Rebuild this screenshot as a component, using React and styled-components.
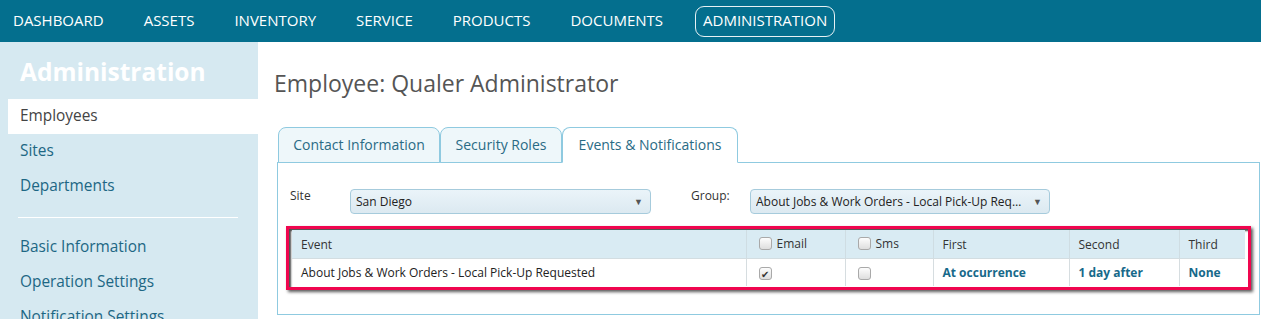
import styled, { createGlobalStyle } from "styled-components";

const GlobalStyle = createGlobalStyle`
  html, body {
    margin: 0;
    padding: 0;
    background: #fff;
    font-family: "Open Sans", "Noto Sans", Arial, sans-serif;
  }
  * {
    box-sizing: border-box;
  }
`;

const Page = styled.div`
  width: 1261px;
  height: 319px;
  overflow: hidden;
`;

const TopNav = styled.nav`
  height: 42px;
  background: #046f8e;
  display: flex;
  align-items: center;
  gap: 24px;
  padding-left: 5px;
`;

const NavItem = styled.a`
  color: #fff;
  font-size: 15px;
  line-height: 19px;
  padding: 4px 7px 6px 7px;
  border: 1px solid ${(p) => (p.$active ? "rgba(255,255,255,0.9)" : "transparent")};
  border-radius: 9px;
  text-decoration: none;
`;

const Body = styled.div`
  display: flex;
  height: 277px;
`;

const Sidebar = styled.aside`
  width: 258px;
  flex: none;
  background: #d6e9f1;
  padding-top: 12px;
`;

const SideTitle = styled.h2`
  margin: 0 0 9px 20px;
  color: #fff;
  font-size: 24.5px;
  line-height: 36px;
  font-weight: 700;
`;

const SideItem = styled.a`
  display: block;
  height: 35px;
  line-height: 33px;
  margin-left: 8px;
  padding-left: 12px;
  font-size: 15.4px;
  color: ${(p) => (p.$active ? "#444" : "#1d6784")};
  background: ${(p) => (p.$active ? "#fff" : "transparent")};
  text-decoration: none;
`;

const SideDivider = styled.hr`
  margin: 13px 20px 12px 18px;
  border: none;
  border-top: 1px solid #fff;
`;

const Main = styled.main`
  flex: 1;
  padding: 0 3px 0 19px;
`;

const Title = styled.h1`
  margin: 24px 0 0 -3px;
  font-size: 23px;
  line-height: 34px;
  font-weight: 400;
  color: #555;
`;

const Tabs = styled.div`
  display: flex;
  margin-top: 27px;
  padding-left: 1px;
  position: relative;
  z-index: 1;
  margin-bottom: -1px;
`;

const Tab = styled.div`
  width: ${(p) => p.$w}px;
  height: 36px;
  padding-bottom: 2px;
  display: flex;
  align-items: center;
  justify-content: center;
  font-size: 14px;
  color: #2a6b85;
  background: ${(p) => (p.$active ? "#fff" : "#eef7fa")};
  border: 1px solid #8fcae0;
  border-bottom-color: ${(p) => (p.$active ? "#fff" : "#8fcae0")};
  border-radius: 8px 8px 0 0;
`;

const Panel = styled.section`
  border: 1px solid #8fcae0;
  height: 153px;
  padding: 26px 8px 0 8px;
`;

const FilterRow = styled.div`
  display: flex;
  align-items: flex-start;
  padding-left: 4px;
`;

const FieldLabel = styled.label`
  width: ${(p) => p.$w}px;
  font-size: 12px;
  color: #333;
  line-height: 14px;
`;

const Select = styled.div`
  width: ${(p) => p.$w}px;
  height: 25px;
  margin-right: ${(p) => p.$mr || 0}px;
  border: 1px solid #a6cbdc;
  border-radius: 4px;
  background: linear-gradient(#eaf4f9, #dce9f1);
  display: flex;
  align-items: center;
  padding: 0 7px 0 5px;
  font-size: 12px;
  color: #222;
  white-space: nowrap;
`;

const SelectText = styled.span`
  flex: 1;
  min-width: 0;
  overflow: hidden;
  text-overflow: ellipsis;
`;

const Caret = styled.span`
  flex: none;
  font-size: 9px;
  color: #555;
  margin-left: 6px;
`;

const Highlight = styled.div`
  margin-top: 12px;
  width: 965px;
  border: 3px solid #f0064f;
  box-shadow: 2px 2px 3px rgba(0, 0, 0, 0.65), inset 2px 2px 2px rgba(0, 0, 0, 0.7);
  padding: 1px 3px 1px 3px;
`;

const Table = styled.table`
  border-collapse: collapse;
  width: 953px;
  font-size: 12px;
  table-layout: fixed;
`;

const Th = styled.th`
  width: ${(p) => p.$w}px;
  height: 28px;
  background: #d9ebf3;
  text-align: left;
  font-weight: 400;
  color: #333;
  padding: 2px 0 0 ${(p) => p.$pl || 9}px;
  border-left: 1px solid #cfdde3;
  border-bottom: 1px solid #d3dde1;
  &:first-child {
    border-left: none;
  }
`;

const Td = styled.td`
  height: 28px;
  padding: 0 0 0 ${(p) => p.$pl || 9}px;
  color: ${(p) => (p.$link ? "#17698a" : "#222")};
  font-weight: ${(p) => (p.$link ? 700 : 400)};
  border-left: 1px solid #d6dde0;
  &:first-child {
    border-left: none;
  }
`;

const CheckLabel = styled.span`
  display: inline-flex;
  align-items: center;
  gap: 5px;
`;

const Check = styled.span`
  display: inline-flex;
  align-items: center;
  justify-content: center;
  width: 13px;
  height: 13px;
  border: 1px solid #a9a9a9;
  border-radius: 3px;
  background: linear-gradient(#fdfdfd, #dedede);
  font-size: 10px;
  line-height: 1;
  color: #333;
  vertical-align: middle;
`;

const App = () => {
  const nav = ["DASHBOARD", "ASSETS", "INVENTORY", "SERVICE", "PRODUCTS", "DOCUMENTS", "ADMINISTRATION"];
  return (
    <Page>
      <GlobalStyle />
      <TopNav>
        {nav.map((n) => (
          <NavItem key={n} $active={n === "ADMINISTRATION"}>
            {n}
          </NavItem>
        ))}
      </TopNav>
      <Body>
        <Sidebar>
          <SideTitle>Administration</SideTitle>
          <SideItem $active>Employees</SideItem>
          <SideItem>Sites</SideItem>
          <SideItem>Departments</SideItem>
          <SideDivider />
          <SideItem>Basic Information</SideItem>
          <SideItem>Operation Settings</SideItem>
          <SideItem>Notification Settings</SideItem>
        </Sidebar>
        <Main>
          <Title>Employee: Qualer Administrator</Title>
          <Tabs>
            <Tab $w={162}>Contact Information</Tab>
            <Tab $w={122}>Security Roles</Tab>
            <Tab $w={176} $active>
              Events &amp; Notifications
            </Tab>
          </Tabs>
          <Panel>
            <FilterRow>
              <FieldLabel $w={60}>Site</FieldLabel>
              <Select $w={301} $mr={40}>
                <SelectText>San Diego</SelectText>
                <Caret>▼</Caret>
              </Select>
              <FieldLabel $w={59}>Group:</FieldLabel>
              <Select $w={300}>
                <SelectText>About Jobs &amp; Work Orders - Local Pick-Up Requested</SelectText>
                <Caret>▼</Caret>
              </Select>
            </FilterRow>
            <Highlight>
              <Table>
                <thead>
                  <tr>
                    <Th $w={454}>Event</Th>
                    <Th $w={99} $pl={12}>
                      <CheckLabel>
                        <Check />
                        Email
                      </CheckLabel>
                    </Th>
                    <Th $w={88} $pl={12}>
                      <CheckLabel>
                        <Check />
                        Sms
                      </CheckLabel>
                    </Th>
                    <Th $w={136}>First</Th>
                    <Th $w={110}>Second</Th>
                    <Th $w={66}>Third</Th>
                  </tr>
                </thead>
                <tbody>
                  <tr>
                    <Td>About Jobs &amp; Work Orders - Local Pick-Up Requested</Td>
                    <Td $pl={12}>
                      <Check>✔</Check>
                    </Td>
                    <Td $pl={12}>
                      <Check />
                    </Td>
                    <Td $link>At occurrence</Td>
                    <Td $link>1 day after</Td>
                    <Td $link>None</Td>
                  </tr>
                </tbody>
              </Table>
            </Highlight>
          </Panel>
        </Main>
      </Body>
    </Page>
  );
};

export default App;
